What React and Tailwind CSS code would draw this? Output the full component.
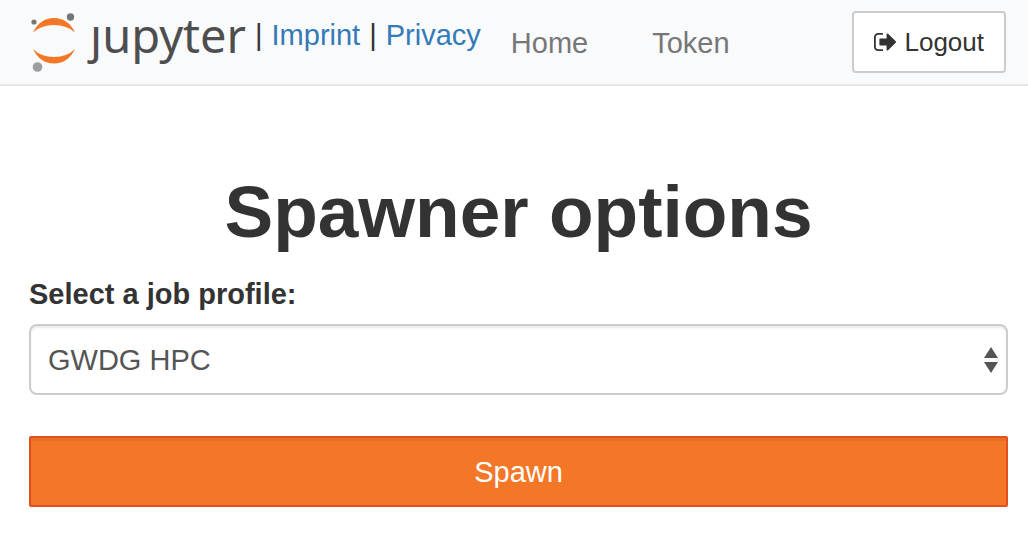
import React from "react";

function JupyterLogo() {
  return (
    <a href="#home" aria-label="jupyter" className="flex items-start text-[#4e4e4e]">
      <svg viewBox="0 0 48 64" className="h-16 w-12 shrink-0" aria-hidden="true">
        <path d="M3 21.5 Q10 7 24 7 Q38 7 45 21.5 Q37 14 24 14 Q11 14 3 21.5Z" fill="#f37726" />
        <path d="M3 38 Q11 46 24 46 Q37 46 45 38 Q38 52.5 24 52.5 Q10 52.5 3 38Z" fill="#f37726" />
        <circle cx="4" cy="11" r="2.6" fill="#767677" />
        <circle cx="40.5" cy="6" r="3.7" fill="#767677" />
        <circle cx="7.5" cy="56" r="4.8" fill="#9e9e9e" />
      </svg>
      <span className="ml-3 font-['Noto_Sans','Open_Sans',sans-serif] text-[47px] leading-[48px]">ȷupyter</span>
    </a>
  );
}

function SignOutIcon() {
  return (
    <svg viewBox="64 192 1568 1408" className="h-5 w-[22px]" fill="currentColor" aria-hidden="true">
      <path d="M704 1440q0 4 1 20t.5 26.5-3 23.5-10 19.5-20.5 6.5h-320q-119 0-203.5-84.5t-84.5-203.5v-704q0-119 84.5-203.5t203.5-84.5h320q13 0 22.5 9.5t9.5 22.5q0 4 1 20t.5 26.5-3 23.5-10 19.5-20.5 6.5h-320q-66 0-113 47t-47 113v704q0 66 47 113t113 47h312l11.5 1 11.5 3 8 5.5 7 9 2 13.5zm928-544q0 26-19 45l-544 544q-19 19-45 19t-45-19-19-45v-288h-448q-26 0-45-19t-19-45v-384q0-26 19-45t45-19h448v-288q0-26 19-45t45-19 45 19l544 544q19 19 19 45z" />
    </svg>
  );
}

export default function App() {
  return (
    <div className="bg-white font-['Liberation_Sans',Arial,sans-serif] text-[29px] leading-10 text-[#333]">
      <header className="flex items-start border-b-2 border-[#e7e7e7] bg-[#f9fafc] pt-[11px] pr-[22px] pb-[9px] pl-[30px]">
        <JupyterLogo />
        <div className="ml-[9px] flex gap-[9px] pt-1 whitespace-nowrap">
          <span>|</span>
          <a href="#imprint" className="text-[#337ab7]">Imprint</a>
          <span>|</span>
          <a href="#privacy" className="text-[#337ab7]">Privacy</a>
        </div>
        <nav className="ml-[30px] flex gap-16 pt-3 text-[#777]">
          <a href="#home">Home</a>
          <a href="#token">Token</a>
        </nav>
        <button
          type="button"
          className="ml-auto flex items-center gap-2 rounded border-2 border-[#ccc] bg-white px-5 py-[9px] text-[26px] leading-10"
        >
          <SignOutIcon />
          Logout
        </button>
      </header>

      <main className="pt-20 pr-5 pb-12 pl-[29px]">
        <h1 className="text-center text-[73px] leading-[92px] font-bold">Spawner options</h1>
        <form onSubmit={(event) => event.preventDefault()}>
          <label htmlFor="profile" className="mt-4 block font-bold">
            Select a job profile:
          </label>
          <div className="relative mt-[10px]">
            <select
              id="profile"
              className="block w-full appearance-none rounded-lg border-2 border-[#ccc] bg-white px-[17px] pt-[17px] pb-[15px] leading-[35px] text-[#555] shadow-[inset_0_2px_2px_rgba(0,0,0,0.075)]"
            >
              <option>GWDG HPC</option>
            </select>
            <svg
              viewBox="0 0 14 28"
              className="pointer-events-none absolute top-1/2 right-[10px] h-7 w-3.5 -translate-y-1/2"
              fill="#555"
              aria-hidden="true"
            >
              <path d="M7 1 L14 12 H0Z M0 16 H14 L7 27Z" />
            </svg>
          </div>
          <button
            type="submit"
            className="mt-[41px] block w-full rounded-xs border-2 border-[#e34f21] bg-[#f37726] pt-[17px] pb-[15px] leading-[35px] text-white shadow-[inset_0_3px_0_rgba(0,0,0,0.06)]"
          >
            Spawn
          </button>
        </form>
      </main>
    </div>
  );
}
